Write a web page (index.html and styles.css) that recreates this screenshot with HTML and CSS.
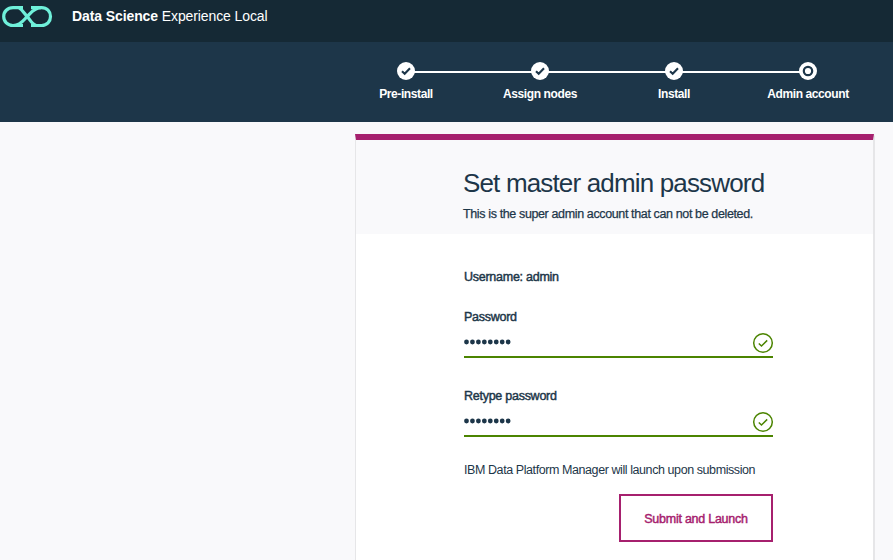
FILE: index.html
```html
<!DOCTYPE html>
<html lang="en">
<head>
<meta charset="utf-8">
<title>Data Science Experience Local</title>
<link rel="stylesheet" href="styles.css">
</head>
<body>
<header class="topbar">
  <svg class="logo" width="56" height="32" viewBox="0 0 56 32" fill="none" stroke="#6ff0da" stroke-width="3.2">
    <path d="M23 7.700H13C7.500 7.700 3.700 11.500 3.700 16.500S7.500 25.500 13 25.500C21 25.500 24 19.500 27.200 16.500C31 13 34 7.700 41.500 7.700C47 7.700 50.500 11.500 50.500 16.500S47 25.500 41.500 25.500H31"/>
    <path d="M19 8C22 9 24.500 14 27.200 16.500C30 19.500 32 24.500 36 25.300"/>
    <path d="M31 7.700H41M13 25.500H23"/>
  </svg>
  <div class="brand"><b>Data Science</b> <span>Experience Local</span></div>
</header>
<nav class="progress">
  <ol class="steps">
    <li class="step"><svg class="mark" viewBox="0 0 18 18"><circle cx="9" cy="9" r="9"/><path d="M5 9.200l2.700 2.600L13 6.300"/></svg><span class="step-label">Pre-install</span></li>
    <li class="step"><svg class="mark" viewBox="0 0 18 18"><circle cx="9" cy="9" r="9"/><path d="M5 9.200l2.700 2.600L13 6.300"/></svg><span class="step-label">Assign nodes</span></li>
    <li class="step"><svg class="mark" viewBox="0 0 18 18"><circle cx="9" cy="9" r="9"/><path d="M5 9.200l2.700 2.600L13 6.300"/></svg><span class="step-label">Install</span></li>
    <li class="step"><svg class="mark" viewBox="0 0 18 18"><circle cx="9" cy="9" r="9"/><circle class="ring" cx="9" cy="9" r="4.200"/></svg><span class="step-label">Admin account</span></li>
  </ol>
</nav>
<main class="card">
  <div class="card-head">
    <h1>Set master admin password</h1>
    <p>This is the super admin account that can not be deleted.</p>
  </div>
  <form class="card-body">
    <div class="username">Username: admin</div>
    <div class="field">
      <label>Password</label>
      <div class="entry">
        <svg class="dots" width="48" height="6"><path d="M2.500 3h44"/></svg>
        <svg class="valid" width="22" height="22" viewBox="0 0 22 22"><circle cx="11" cy="11" r="9.300"/><path d="M6.800 11.500l2.700 2.500 5.700-5.600"/></svg>
      </div>
    </div>
    <div class="field">
      <label>Retype password</label>
      <div class="entry">
        <svg class="dots" width="48" height="6"><path d="M2.500 3h44"/></svg>
        <svg class="valid" width="22" height="22" viewBox="0 0 22 22"><circle cx="11" cy="11" r="9.300"/><path d="M6.800 11.500l2.700 2.500 5.700-5.600"/></svg>
      </div>
    </div>
    <p class="note">IBM Data Platform Manager will launch upon submission</p>
    <button class="submit" type="button">Submit and Launch</button>
  </form>
</main>
</body>
</html>
```
FILE: styles.css
```css
* { box-sizing: border-box; }
body {
  margin: 0;
  height: 560px;
  overflow: hidden;
  background: #f9f9fb;
  color: #1d3649;
  font: 12.5px/16px "Liberation Sans", Arial, sans-serif;
}
.topbar {
  display: flex;
  height: 42px;
  background: #152935;
  color: #fff;
}
.logo { flex: none; }
.brand {
  margin: 7px 0 0 16px;
  font-size: 14px;
  line-height: 18px;
  letter-spacing: -0.1px;
  white-space: nowrap;
}
.progress {
  height: 80px;
  background: #1d3649;
  padding: 20px 0 0 339px;
}
.steps {
  display: flex;
  margin: 0;
  padding: 0;
  list-style: none;
}
.step {
  position: relative;
  flex: none;
  width: 134px;
  display: flex;
  flex-direction: column;
  align-items: center;
  color: #fff;
}
.step:not(:last-child)::after {
  content: "";
  position: absolute;
  left: 75px;
  top: 9px;
  width: 118px;
  height: 2px;
  background: #fff;
}
.mark { display: block; width: 18px; height: 18px; fill: #fff; }
.mark path { fill: none; stroke: #1d3649; stroke-width: 2.1; }
.mark .ring { stroke: #1d3649; stroke-width: 2.2; }
.step-label {
  margin-top: 6px;
  font-size: 12px;
  font-weight: 700;
  letter-spacing: -0.4px;
  white-space: nowrap;
}
.card {
  width: 519px;
  height: 440px;
  margin: 12px 0 0 355px;
  border: 1px solid #e6e6e8;
  border-top: 6px solid #a6206e;
  border-bottom: 0;
  box-shadow: 0 0 1px 0.5px #e6e6e8;
  background: #fff;
}
.card-head {
  height: 94px;
  padding: 27px 0 0 107px;
  background: #f9f9fb;
  white-space: nowrap;
}
h1 {
  margin: 0;
  font-size: 26px;
  line-height: 32px;
  font-weight: 400;
  letter-spacing: -0.84px;
}
.card-head p {
  margin: 7px 0 0;
  letter-spacing: -0.37px;
  -webkit-text-stroke: 0.25px;
}
.card-body {
  width: 417px;
  padding: 35px 0 0 108px;
  display: flex;
  flex-direction: column;
}
.username, label {
  -webkit-text-stroke: 0.45px;
  letter-spacing: -0.26px;
}
.username { margin-bottom: 24px; }
.field { height: 79px; }
.field label { display: block; }
.entry {
  height: 33px;
  display: flex;
  justify-content: space-between;
  border-bottom: 2px solid #4b8400;
}
.dots { margin-top: 14px; }
.dots path {
  stroke: #1d3649;
  stroke-width: 4.8;
  stroke-linecap: round;
  stroke-dasharray: 0 5.95;
}
.valid { margin: 7px -1px 0 0; fill: none; stroke: #4b8400; stroke-width: 1.5; }
.note {
  margin: -5px 0 0;
  white-space: nowrap;
  letter-spacing: -0.42px;
}
.submit {
  align-self: flex-end;
  width: 154px;
  height: 48px;
  margin-top: 16px;
  padding: 1px 0 0;
  border: 2px solid #a6206e;
  background: #fff;
  color: #a6206e;
  font: inherit;
  letter-spacing: -0.25px;
  -webkit-text-stroke: 0.45px;
}
```
